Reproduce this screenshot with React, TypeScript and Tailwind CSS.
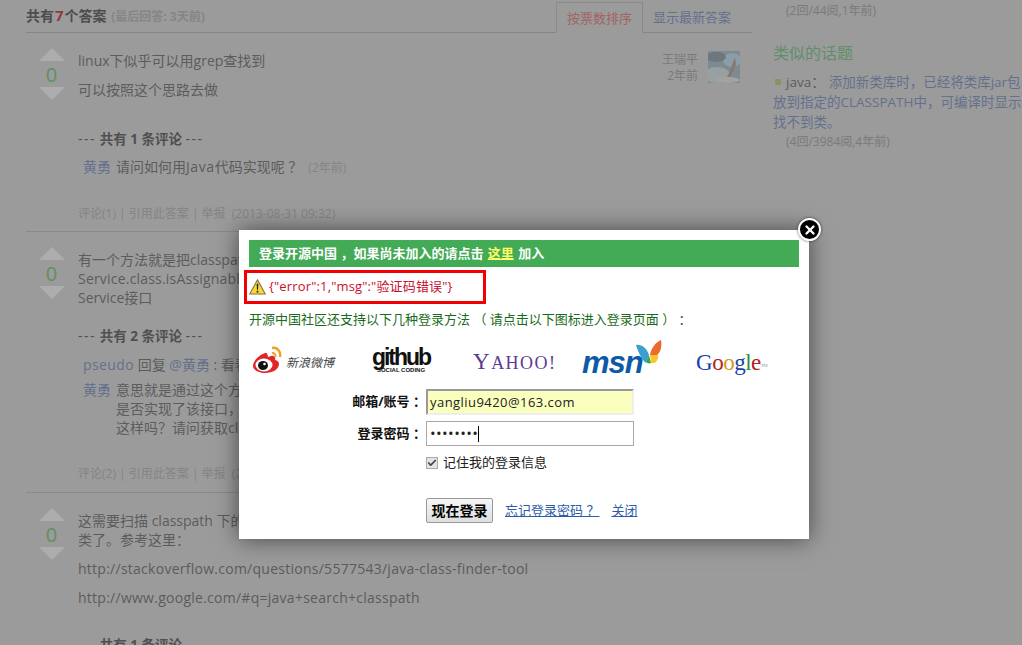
import { Check, X } from "lucide-react";

const Vote = () => (
  <div className="flex w-[52px] shrink-0 flex-col items-center pr-[1px] pt-[15px]">
    <div className="h-0 w-0 border-x-[13px] border-b-[13px] border-x-transparent border-b-[#adadad]" />
    <div className="h-[26px] pt-[1px] text-[20px] leading-[26px] text-[#5f9060]">0</div>
    <div className="h-0 w-0 border-x-[13px] border-t-[13px] border-x-transparent border-t-[#adadad]" />
  </div>
);

const CommentHead = ({ n }: { n: number }) => (
  <p className="h-[19px] text-[14px] leading-[19px] text-[#505050]">
    <span className="tracking-[1.5px]">---</span> <b className="text-[13.500px]">共有 {n} 条评论</b> <span className="tracking-[1.5px]">---</span>
  </p>
);

const Footer = ({ children }: { children: React.ReactNode }) => (
  <p className="h-[19px] text-[12px] leading-[19px] text-[#848484]">{children}</p>
);

const Weibo = () => (
  <div className="flex items-center gap-[2px]">
    <svg width="32" height="28" viewBox="0 0 32 28">
      <path d="M13 7C7 9 1 15 1 20c0 4 6 7 12 7 8 0 14-4 14-9 0-3-3-4-4-4 1-3-1-5-4-4l-3 1c0-3-2-5-3-4z" fill="#e2252b" />
      <ellipse cx="12" cy="19" rx="8.500" ry="6.500" fill="#fff" />
      <ellipse cx="11" cy="19.500" rx="5" ry="4.500" fill="#111" />
      <circle cx="12.500" cy="18" r="1.300" fill="#fff" />
      <path d="M20 2c5-1 9 3 8 9" fill="none" stroke="#f2a01e" strokeWidth="2.400" />
      <path d="M20 7c2-.5 4 1.500 3.500 4" fill="none" stroke="#f2a01e" strokeWidth="2" />
    </svg>
    <span className="pt-[5px] text-[12px] italic leading-none text-[#444]">新浪微博</span>
  </div>
);

const Github = () => (
  <div className="flex w-[56px] flex-col items-center">
    <span className="font-['Liberation_Sans',sans-serif] text-[23px] font-bold leading-[20px] tracking-[-2px] text-[#111]">github</span>
    <span className="font-['Liberation_Sans',sans-serif] text-[6px] font-bold leading-[7px] text-[#111]">SOCIAL CODING</span>
  </div>
);

const Yahoo = () => (
  <span className="block pt-[3px] font-['Liberation_Serif',serif] text-[18px] leading-none tracking-[1.5px] text-[#5f3a8f]">
    <span className="text-[23px]">Y</span>AHOO!
  </span>
);

const Msn = () => (
  <div className="relative flex h-[36px] w-fit items-end">
    <span className="font-['Liberation_Sans',sans-serif] text-[31px] font-bold italic leading-[30px] tracking-[-1px] text-[#0d5ba6]">msn</span>
    <svg className="absolute -right-[20px] -top-[2px]" width="27" height="26" viewBox="0 0 27 26">
      <path d="M0 5c5-1 11 3 13 10l-3 8C6 20 2 12 0 5z" fill="#3c9fcf" />
      <path d="M10 22l3-7 2 8c-2 1-4 0-5-1z" fill="#37a84a" />
      <path d="M25 0c1 6 0 12-4 15l-7 0C15 8 20 2 25 0z" fill="#ec6a2d" />
      <path d="M14 15l8 0c1 3-1 7-4 8l-3 0z" fill="#fbc52d" />
    </svg>
  </div>
);

const Google = () => (
  <span className="pt-[4px] font-['Liberation_Serif',serif] text-[23px] leading-none tracking-[-0.5px]">
    <span className="text-[#1a3fb0]">G</span>
    <span className="text-[#b3201c]">o</span>
    <span className="text-[#cf9b1b]">o</span>
    <span className="text-[#1a3fb0]">g</span>
    <span className="text-[#2f8f3a]">l</span>
    <span className="text-[#b3201c]">e</span>
    <sup className="text-[5px] text-[#999]">TM</sup>
  </span>
);

const Avatar = () => (
  <svg className="mr-[12px]" width="32" height="32" viewBox="0 0 32 32">
    <rect width="32" height="32" fill="#7d8a92" />
    <ellipse cx="9" cy="24" rx="13" ry="8" fill="#99a0a2" />
    <ellipse cx="24" cy="9" rx="9" ry="7" fill="#8b9ea8" />
    <ellipse cx="8" cy="6" rx="10" ry="5" fill="#6d777d" />
    <path d="M27 6l-5 14-4 8 5-3 5-12z" fill="#8a7672" />
    <ellipse cx="20" cy="29" rx="12" ry="3" fill="#a3a39d" />
  </svg>
);

export default function App() {
  return (
    <div className="relative h-[645px] w-[1022px] overflow-hidden bg-[#9b9b9b] font-['Open_Sans','Noto_Sans_CJK_SC',sans-serif] [text-spacing-trim:space-all]">
      <div className="flex">
        {/* Answers */}
        <div className="ml-[26px] w-[726px] shrink-0">
          <div className="flex h-[33px] items-end justify-between border-b border-[#858585]">
            <p className="pb-[5px] text-[14px] font-bold leading-[20px] text-[#4d4d4d]">
              共有<span className="mx-[1px] text-[15px] text-[#8e3a3a]">7</span>个答案 <span className="ml-[1px] text-[12px] text-[#858585]">(最后回答: 3天前)</span>
            </p>
            <div className="flex text-[13px] leading-[30px]">
              <div className="-mb-px h-[31px] w-[87px] border border-b-[#9b9b9b] border-[#8a8a8a] text-center text-[#a06464]">按票数排序</div>
              <div className="w-[109px] pl-[10px] text-[#64708c]">显示最新答案</div>
            </div>
          </div>

          <div className="flex h-[199px] border-b border-[#8a8a8a]">
            <Vote />
            <div className="flex-1 pt-[18px] text-[14px] leading-[20px] text-[#5c5c5c]">
              <p>linux下似乎可以用grep查找到</p>
              <p className="mt-[9px]">可以按照这个思路去做</p>
              <div className="mt-[29px]"><CommentHead n={1} /></div>
              <p className="mt-[9px] ml-[5px] leading-[20px]">
                <span className="text-[#64708c]">黄勇</span>
                <span className="ml-[5px]">请问如何用<span className="tracking-[0.6px]">Java</span>代码实现呢 ？</span>
                <span className="ml-[6px] text-[12px] text-[#858585]">(2年前)</span>
              </p>
              <div className="mt-[26px]"><Footer>评论(1) | 引用此答案 | 举报 &nbsp;(2013-08-31 09:32)</Footer></div>
            </div>
            <div className="flex pt-[18px]">
              <div className="pr-[10px] text-right text-[12px] leading-[16px] text-[#7a7a7a]">
                <p className="mt-[1px]">王瑞平</p>
                <p>2年前</p>
              </div>
              <Avatar />
            </div>
          </div>

          <div className="flex h-[261px] border-b border-[#8a8a8a]">
            <Vote />
            <div className="flex-1 pt-[18px] text-[14px] leading-[19px] text-[#5c5c5c]">
              <p>有一个方法就是把classpath</p>
              <p className="tracking-[0.2px]">Service.class.isAssignableFrom</p>
              <p>Service接口</p>
              <div className="mt-[19px]"><CommentHead n={2} /></div>
              <p className="mt-[10px] ml-[5px] leading-[19px]">
                <span className="tracking-[0.4px] text-[#64708c]">pseudo</span> 回复 <span className="text-[#64708c]">@黄勇</span> : 看看
              </p>
              <div className="mt-[6px] ml-[5px] flex leading-[19px]">
                <span className="w-[33px] shrink-0 text-[#64708c]">黄勇</span>
                <div>
                  <p>意思就是通过这个方法</p>
                  <p>是否实现了该接口，</p>
                  <p>这样吗？请问获取class</p>
                </div>
              </div>
              <div className="mt-[27px]"><Footer>评论(2) | 引用此答案 | 举报 &nbsp;(2</Footer></div>
            </div>
          </div>

          <div className="flex">
            <Vote />
            <div className="flex-1 pt-[18px] text-[14px] leading-[19px] text-[#5c5c5c]">
              <p>这需要扫描 classpath 下的</p>
              <p>类了。参考这里：</p>
              <p className="mt-[10px] tracking-[0.26px]">http://stackoverflow.com/questions/5577543/java-class-finder-tool</p>
              <p className="mt-[10px] tracking-[0.26px]">http://www.google.com/#q=java+search+classpath</p>
              <div className="mt-[28px]"><CommentHead n={1} /></div>
            </div>
          </div>
        </div>

        {/* Sidebar */}
        <div className="ml-[21px] w-[249px] shrink-0 overflow-hidden whitespace-nowrap pt-[2px] text-[12px] leading-[20px] text-[#64708c]">
          <p className="ml-[13px] h-[18px] leading-[18px] text-[#7a7a7a]">(2回/44阅,1年前)</p>
          <p className="mt-[22px] text-[16px] leading-[22px] text-[#5f8f6a]">类似的话题</p>
          <p className="mt-[8px] flex items-center text-[13.500px]">
            <span className="ml-[2px] mr-[5px] h-[6px] w-[6px] bg-[#87945f]" />
            <span className="text-[#5c5c5c]">java：</span>
            <span className="ml-[4px]">添加新类库时，已经将类库jar包</span>
          </p>
          <p className="text-[13.500px]">放到指定的CLASSPATH中，可编译时显示</p>
          <p className="text-[13.500px]">找不到类。</p>
          <p className="ml-[13px] text-[#7a7a7a]">(4回/3984阅,4年前)</p>
        </div>
      </div>

      {/* Login dialog */}
      <div className="absolute left-[239px] top-[230px] h-[309px] w-[570px] bg-white p-[10px] shadow-[0_0_22px_rgba(0,0,0,0.55)]">
        <div className="flex h-[27px] items-center whitespace-pre bg-[#43aa55] pl-[10px] text-[13px] font-bold text-white">
          登录开源中国 ，如果尚未加入的请点击 <span className="mx-[1px] text-[#ffff66] underline">这里</span> 加入
        </div>
        <div className="-ml-[5px] mt-[3px] flex h-[34px] w-[242px] items-center gap-[3px] border-[3px] border-[#f00000] pl-[2px] text-[13px] tracking-[0.15px] text-[#c8102e]">
          <svg width="17" height="16" viewBox="0 0 16 15">
            <path d="M8 .8 15.300 14H.7z" fill="#fbd932" stroke="#7d7350" strokeWidth="1" />
            <path d="M7.200 4.500h1.600l-.3 5.500h-1zM7.200 11h1.600v1.700H7.200z" fill="#222" />
          </svg>
          <span>{'{"error":1,"msg":"验证码错误"}'}</span>
        </div>
        <p className="mt-[6px] text-[13px] leading-[18px] text-[#1a6b1a]">开源中国社区还支持以下几种登录方法 （ 请点击以下图标进入登录页面 ） ：</p>

        <div className="mt-[12px] flex h-[40px] items-center pl-[3px]">
          <div className="w-[121px]"><Weibo /></div>
          <div className="w-[100px]"><Github /></div>
          <div className="w-[109px]"><Yahoo /></div>
          <div className="w-[114px]"><Msn /></div>
          <Google />
        </div>

        <div className="mt-[9px] flex items-center">
          <span className="w-[177px] text-right text-[13px] font-bold text-[#111]">邮箱/账号 ：</span>
          <div className="h-[26px] w-[208px] border-2 border-b-[#eee] border-r-[#eee] border-[#999] bg-[#fbffbe] pl-[2px] text-[13px] leading-[22px] tracking-[0.45px] text-[#222]">yangliu9420@163.com</div>
        </div>
        <div className="mt-[6px] flex items-center">
          <span className="w-[177px] text-right text-[13px] font-bold text-[#111]">登录密码 ：</span>
          <div className="flex h-[25px] w-[208px] items-center border border-[#aaa] pl-[3px] text-[#222]">
            <span className="text-[15px] leading-none tracking-[0.4px]">••••••••</span>
            <span className="h-[16px] w-px bg-black" />
          </div>
        </div>
        <label className="ml-[177px] mt-[8px] flex h-[18px] items-center gap-[5px] text-[13px] text-[#222]">
          <span className="flex h-[12px] w-[12px] items-center justify-center border border-[#aaa] bg-[#e4e4e4]">
            <Check size={10} strokeWidth={4} className="text-[#444]" />
          </span>
          记住我的登录信息
        </label>

        <div className="ml-[177px] mt-[26px] flex items-center text-[13px]">
          <button className="h-[25px] w-[67px] rounded-[2px] border border-[#999] bg-gradient-to-b from-[#f6f6f6] to-[#dedede] text-[14px] font-bold text-black">现在登录</button>
          <a className="ml-[12px] whitespace-pre text-[#2a5caa] underline">忘记登录密码 ？</a>
          <a className="ml-[12px] text-[#2a5caa] underline">关闭</a>
        </div>
      </div>

      <div className="absolute left-[798px] top-[218px] flex h-[23px] w-[23px] items-center justify-center rounded-full border-2 border-white bg-black shadow-[0_0_3px_rgba(0,0,0,0.6)]">
        <X size={14} strokeWidth={4} className="text-white" />
      </div>
    </div>
  );
}
